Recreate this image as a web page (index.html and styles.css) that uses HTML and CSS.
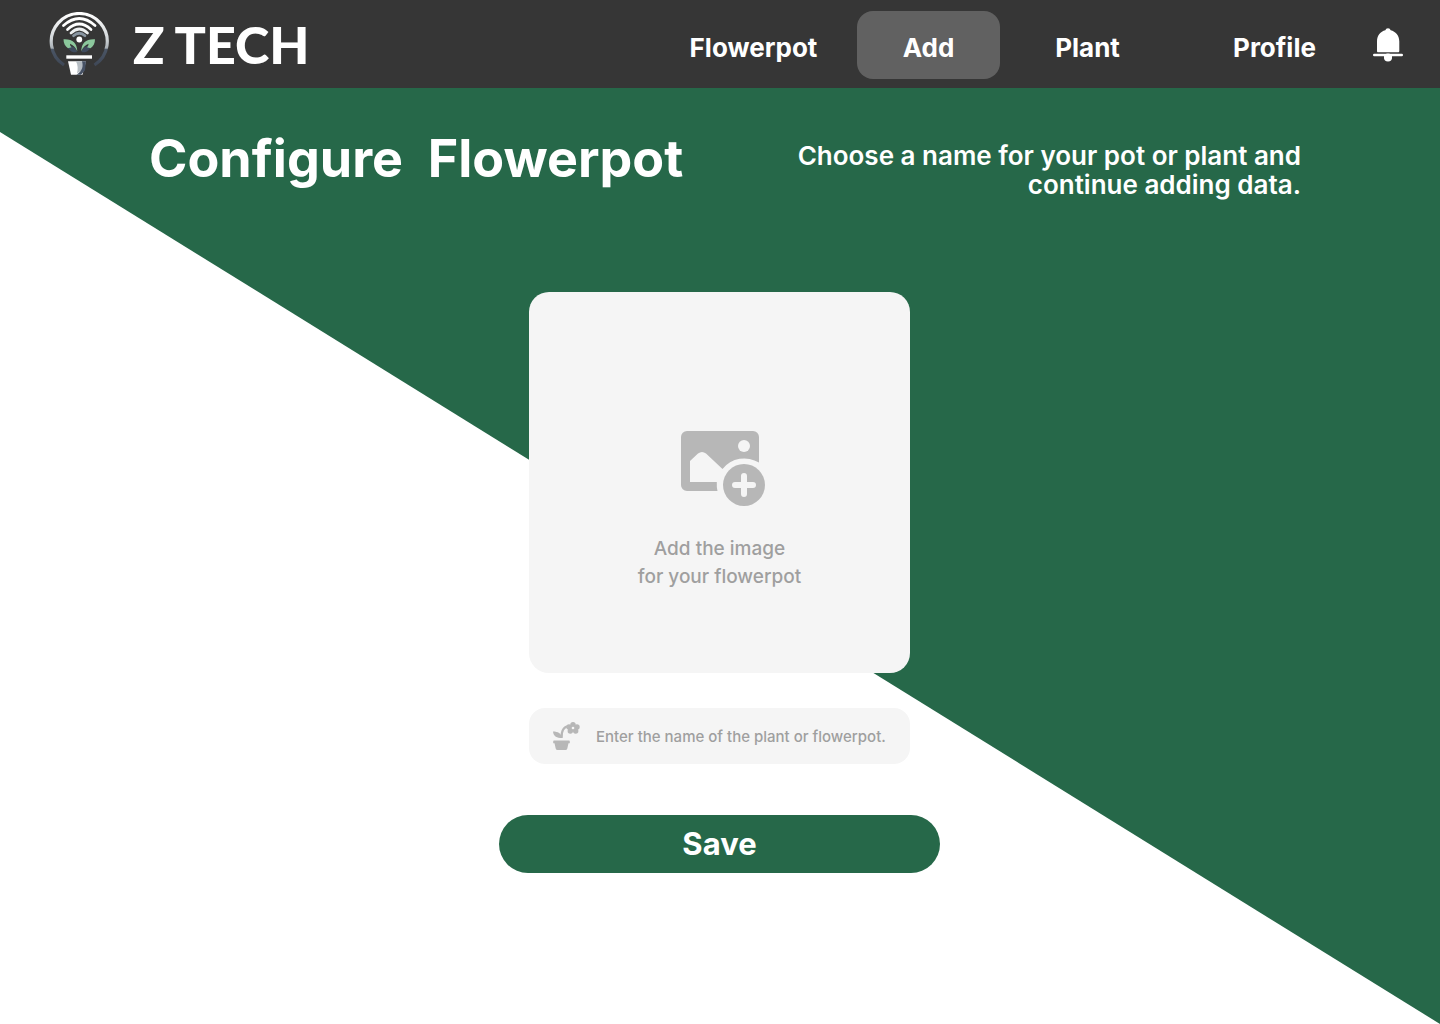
FILE: index.html
```html
<!DOCTYPE html>
<html lang="en">
<head>
<meta charset="utf-8">
<meta name="viewport" content="width=device-width, initial-scale=1">
<title>Configure Flowerpot – Z TECH</title>
<link rel="stylesheet" href="styles.css">
</head>
<body>
<header class="topbar">
  <a class="brand" href="#" aria-label="Z TECH home">
    <svg class="brand-mark" viewBox="0 0 60 64" aria-hidden="true">
      <defs>
        <linearGradient id="ring" x1="0" y1="0" x2="0" y2="1">
          <stop offset="0" stop-color="#fff"/><stop offset=".5" stop-color="#cfd4d7"/><stop offset=".67" stop-color="#a9b0b6"/><stop offset=".7" stop-color="#4a5565"/><stop offset="1" stop-color="#3f4857"/>
        </linearGradient>
      </defs>
      <path d="M15 53A28 28 0 1 1 45.500 53" fill="none" stroke="url(#ring)" stroke-width="3.200"/>
      <g fill="none" stroke="#fff" stroke-width="2.700" stroke-linecap="round">
        <path d="M14.500 13.500Q30.300 -0.500 46 13.500"/>
        <path d="M18.500 17.500Q30.300 6.500 42 17.500"/>
        <path d="M22 21Q30.300 13 38.500 21" stroke="#eef0f1"/>
        <path d="M24.500 23.700Q30.300 18.800 36 23.700" stroke="#8995a1"/>
      </g>
      <circle cx="30.300" cy="27.500" r="2.900" fill="#fff"/>
      <path d="M19 35c3-2 8 0 9 5-4 1-8-1-9-5zM41.500 35c-3-2-8 0-9 5 4 1 8-1 9-5z" fill="#3f4b5e"/>
      <path d="M14.500 27.300c9-.5 13.500 3.500 13.800 12-2-4-4-6-7.300-7.500 0 1.500.5 2.500 1.500 3.500l-3.500 1c-3-2-4.500-5-4.500-9zM46 27.300c-9-.5-13.500 3.500-13.800 12 2-4 4-6 7.300-7.500 0 1.500-.5 2.500-1.500 3.500l3.500 1c3-2 4.500-5 4.500-9z" fill="#8bc79c"/>
      <path d="M17.300 43.300h25.700v3.400h-25.700z" fill="#fff"/>
      <path d="M19 49.300h18l-3.500 13.400h-11.500z" fill="#fff"/>
      <path d="M27 49.300h7c2.500 5 .5 9-6 12 1-4 1-8-1-12z" fill="#b5bcc2"/>
      <path d="M33 49.300h4l-1 9-4 4.400h-4.500c6-4 7-8 5.500-13.400z" fill="#465164"/>
    </svg>
    <span class="brand-name"><span>Z</span><span>TECH</span></span>
  </a>
  <nav class="menu" aria-label="Main">
    <a class="menu-item" href="#">Flowerpot</a>
    <a class="menu-item is-active" href="#" aria-current="page">Add</a>
    <a class="menu-item" href="#">Plant</a>
    <a class="menu-item" href="#">Profile</a>
  </nav>
  <button class="bell" type="button" aria-label="Notifications">
    <svg viewBox="0 0 30 34" aria-hidden="true">
      <path d="M4 23V13.500C4 7.500 7.500 3.500 12.300 2.300a2.800 2.800 0 0 1 5.400 0C22.500 3.500 26.300 7.500 26.300 13.500V23c0 .9-.5 1.300-1.300 1.300H5.200C4.400 24.300 4 23.900 4 23z" fill="#fff"/>
      <path d="M1.200 25.800h27.600a1 1 0 0 1 0 2.400H19a4 4 0 0 1-8 0H1.200a1 1 0 0 1 0-2.400z" fill="#fff"/>
      <circle cx="15" cy="29.500" r="4" fill="#fff"/>
    </svg>
  </button>
</header>
<main class="page">
  <div class="intro">
    <h1 class="title">Configure  Flowerpot</h1>
    <p class="lead">Choose a name for your pot or plant and continue adding data.</p>
  </div>
  <form class="form">
    <label class="upload">
      <input class="upload-input" type="file" accept="image/*">
      <svg class="upload-icon" viewBox="0 0 84 75" aria-hidden="true">
        <path fill-rule="evenodd" d="M6 0H72a6 6 0 0 1 6 6V31.500A28 28 0 0 0 41.500 38L25 22.500Q21 19.500 17 22.500L9 30V51H35.800Q35.500 56 36.500 60H6a6 6 0 0 1-6-6V6a6 6 0 0 1 6-6z" fill="#b7b7b7"/>
        <circle cx="63" cy="15" r="6" fill="#f5f5f5"/>
        <circle cx="63" cy="54" r="21" fill="#b7b7b7"/>
        <path d="M63 45v18M54 54h18" stroke="#f5f5f5" stroke-width="6" stroke-linecap="round"/>
      </svg>
      <span class="upload-text">Add the image<br>for your flowerpot</span>
    </label>
    <div class="field">
      <svg class="field-icon" viewBox="0 0 28 30" aria-hidden="true">
        <g fill="#b7b7b7">
          <path d="M1 19.500h15q.8 0 .8 1v1.800h-1.300l-1.200 5.200q-.4 1.500-1.800 1.500H4.500q-1.400 0-1.800-1.500L1.500 22.300H.2v-1.800q0-1 .8-1z"/>
          <path d="M0 10.500c5 0 8.500 2 8.800 6.500C4 17 .5 15.500 0 10.500z"/>
          <circle cx="20" cy="3.600" r="2.700"/><circle cx="24" cy="6" r="2.700"/><circle cx="22.700" cy="10" r="2.700"/><circle cx="17.300" cy="10" r="2.700"/><circle cx="16" cy="6" r="2.700"/>
          <circle cx="20" cy="7" r="3.500"/>
        </g>
        <path d="M8.600 17C8.300 9 10.500 5.500 16 5" fill="none" stroke="#b7b7b7" stroke-width="2.200"/>
        <circle cx="20" cy="7" r="1.300" fill="#f5f5f5"/>
      </svg>
      <input class="field-input" type="text" aria-label="Plant or flowerpot name" placeholder="Enter the name of the plant or flowerpot.">
    </div>
    <button class="save" type="submit">Save</button>
  </form>
</main>
</body>
</html>
```
FILE: styles.css
```css
*, *::before { box-sizing: border-box; }

body {
  display: flex;
  flex-direction: column;
  min-height: 100vh;
  margin: 0;
  background: #fff;
  color: #fff;
  font-family: Inter, "Open Sans", sans-serif;
}

.topbar {
  display: flex;
  align-items: center;
  height: 88px;
  padding: 2px 37px 0 49px;
  background: #363636;
}

.brand {
  display: flex;
  align-items: center;
  gap: 24px;
  padding-bottom: 2px;
  color: #fff;
  text-decoration: none;
}

.brand-mark { width: 60px; height: 64px; }

.brand-name {
  display: flex;
  gap: 10px;
  font: 900 52px/64px Lato, sans-serif;
}

.menu {
  display: flex;
  align-items: center;
  gap: 16px;
  margin-left: auto;
}

.menu-item {
  min-width: 143px;
  padding-top: 6px;
  border-radius: 16px;
  color: #fff;
  font-size: 26px;
  font-weight: 700;
  line-height: 62px;
  text-align: center;
  text-decoration: none;
}

.menu-item:first-child { margin-right: 16px; }
.menu-item:last-child { margin-left: 28px; }
.menu-item.is-active { background: #616161; }

.bell {
  width: 30px;
  height: 34px;
  margin-left: 27px;
  padding: 0;
  border: 0;
  background: none;
}

.bell svg { display: block; }

.page {
  position: relative;
  z-index: 0;
  flex: 1;
  padding: 40px 139px 40px 138px;
}

.page::before {
  content: "";
  position: absolute;
  inset: 0;
  z-index: -1;
  background: #266849;
  clip-path: polygon(0 0, 100% 0, 100% 100%, 0 44px);
}

.intro {
  display: flex;
  justify-content: space-between;
  padding-left: 11px;
}

.title {
  margin: 0;
  font-size: 52px;
  font-weight: 700;
  line-height: 62px;
  white-space: pre;
}

.lead {
  max-width: 520px;
  margin: 13px 0 0;
  font-size: 26px;
  font-weight: 600;
  line-height: 29px;
  text-align: right;
}

.form {
  display: flex;
  flex-direction: column;
  align-items: center;
  margin-top: 93px;
}

.upload {
  display: flex;
  flex-direction: column;
  align-items: center;
  width: 381px;
  padding: 139px 0 82px;
  border-radius: 20px;
  background: #f5f5f5;
  cursor: pointer;
}

.upload-input {
  position: absolute;
  width: 1px;
  height: 1px;
  opacity: 0;
}

.upload-icon { width: 84px; height: 75px; margin-left: 7px; }

.upload-text {
  margin-top: 29px;
  color: #9f9f9f;
  font-size: 19px;
  font-weight: 500;
  line-height: 28px;
  text-align: center;
}

.field {
  display: flex;
  align-items: center;
  gap: 15px;
  width: 381px;
  height: 56px;
  margin-top: 35px;
  padding: 0 12px 0 24px;
  border-radius: 16px;
  background: #f5f5f5;
}

.field-icon { flex: none; width: 28px; height: 30px; }

.field-input {
  flex: 1;
  min-width: 0;
  padding: 2px 0 0;
  border: 0;
  background: none;
  color: #9f9f9f;
  font: 500 15px/24px Inter, sans-serif;
}

.field-input::placeholder { color: #9f9f9f; opacity: 1; }

.save {
  width: 441px;
  height: 58px;
  margin-top: 51px;
  border: 0;
  border-radius: 29px;
  background: #266849;
  color: #fff;
  font: 700 31px/40px Inter, sans-serif;
}
```
